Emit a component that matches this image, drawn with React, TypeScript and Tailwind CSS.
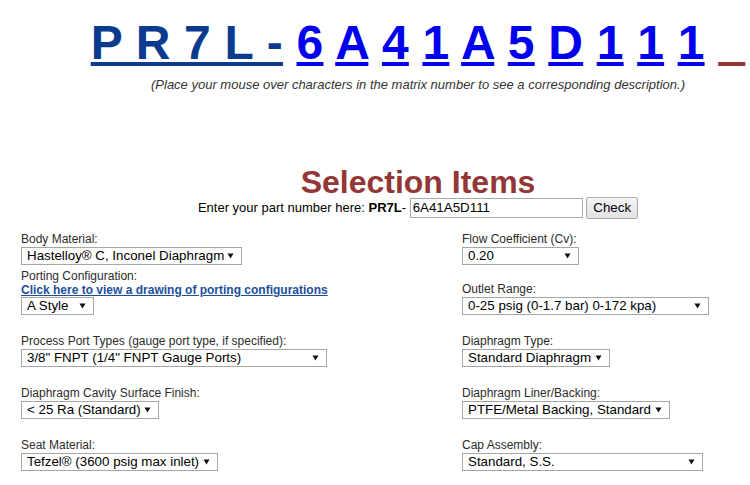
import React from "react";

function Arrow() {
  return (
    <svg width="7" height="6" viewBox="0 0 7 6" className="shrink-0">
      <polygon points="0.5,0.5 6.5,0.5 3.5,5.5" fill="#111" />
    </svg>
  );
}

function Sel({ cls, text }: { cls: string; text: string }) {
  return (
    <div
      className={
        "flex items-center justify-between h-[18px] border border-[#a6a6a6] bg-white pl-[5px] pr-[7px] text-[13.33px] leading-[16px] text-black whitespace-nowrap " +
        cls
      }
    >
      <span>{text}</span>
      <Arrow />
    </div>
  );
}

function Label({ text }: { text: string }) {
  return <div className="text-[12px] leading-[14px] text-[#2b2b2b] whitespace-nowrap">{text}</div>;
}

export default function App() {
  const chars = ["6", "A", "4", "1", "A", "5", "D", "1", "1", "1"];
  return (
    <div className="w-[750px] h-[485px] overflow-hidden bg-white font-['Liberation_Sans',Arial,sans-serif]">
      <div className="w-[836px]">
        <div className="pt-[16px] text-center whitespace-nowrap text-[48px] font-bold leading-[54px] tracking-[0.22px]">
          <span className="underline text-[#0b3b8e]">P R 7 L -</span>
          {chars.map((c, i) => (
            <React.Fragment key={i}>
              {" "}
              <span className="underline text-[#0000ee]">{c}</span>
            </React.Fragment>
          ))}{" "}
          <span className="underline text-[#933636]">{"\u00a0\u00a0"}</span>
        </div>
        <div className="mt-[7px] text-center text-[13px] italic leading-[15px] text-[#333] whitespace-nowrap">
          (Place your mouse over characters in the matrix number to see a corresponding description.)
        </div>
        <div className="mt-[75px] text-center text-[32px] font-bold leading-[30px] text-[#933636]">
          Selection Items
        </div>
        <div className="h-[22px] flex items-center justify-center text-[13px] leading-[16px] text-black whitespace-pre">
          <span>Enter your part number here: </span>
          <span className="font-bold">PR7L</span>
          <span>- </span>
          <div className="w-[173px] h-[20px] border border-[#a9a9a9] bg-white pl-[2px] flex items-center text-[13.33px]">
            6A41A5D111
          </div>
          <span> </span>
          <div className="h-[22px] px-[6px] border border-[#acacac] rounded-[2px] bg-gradient-to-b from-[#f4f4f4] to-[#e2e2e2] flex items-center text-[13.33px]">
            Check
          </div>
        </div>
        <div className="pt-[13px] pl-[21px] flex">
          <div className="w-[441px] flex flex-col items-start">
            <Label text="Body Material:" />
            <div className="mt-[1px]">
              <Sel cls="w-[221px]" text="Hastelloy® C, Inconel Diaphragm" />
            </div>
            <div className="mt-[4px]">
              <Label text="Porting Configuration:" />
            </div>
            <div className="text-[12px] leading-[14px] font-bold underline text-[#1d4f9c] whitespace-nowrap">
              Click here to view a drawing of porting configurations
            </div>
            <Sel cls="w-[73px]" text="A Style" />
            <div className="mt-[19px]">
              <Label text="Process Port Types (gauge port type, if specified):" />
            </div>
            <div className="mt-[1px]">
              <Sel cls="w-[306px]" text={'3/8" FNPT (1/4" FNPT Gauge Ports)'} />
            </div>
            <div className="mt-[19px]">
              <Label text="Diaphragm Cavity Surface Finish:" />
            </div>
            <div className="mt-[1px]">
              <Sel cls="w-[138px]" text={"< 25 Ra (Standard)"} />
            </div>
            <div className="mt-[19px]">
              <Label text="Seat Material:" />
            </div>
            <div className="mt-[1px]">
              <Sel cls="w-[197px]" text="Tefzel® (3600 psig max inlet)" />
            </div>
          </div>
          <div className="flex flex-col items-start">
            <Label text="Flow Coefficient (Cv):" />
            <div className="mt-[1px]">
              <Sel cls="w-[117px]" text="0.20" />
            </div>
            <div className="mt-[17px]">
              <Label text="Outlet Range:" />
            </div>
            <div className="mt-[1px]">
              <Sel cls="w-[247px]" text="0-25 psig (0-1.7 bar) 0-172 kpa)" />
            </div>
            <div className="mt-[19px]">
              <Label text="Diaphragm Type:" />
            </div>
            <div className="mt-[1px]">
              <Sel cls="w-[148px]" text="Standard Diaphragm" />
            </div>
            <div className="mt-[19px]">
              <Label text="Diaphragm Liner/Backing:" />
            </div>
            <div className="mt-[1px]">
              <Sel cls="w-[208px]" text="PTFE/Metal Backing, Standard" />
            </div>
            <div className="mt-[19px]">
              <Label text="Cap Assembly:" />
            </div>
            <div className="mt-[1px]">
              <Sel cls="w-[241px]" text="Standard, S.S." />
            </div>
          </div>
        </div>
      </div>
    </div>
  );
}
